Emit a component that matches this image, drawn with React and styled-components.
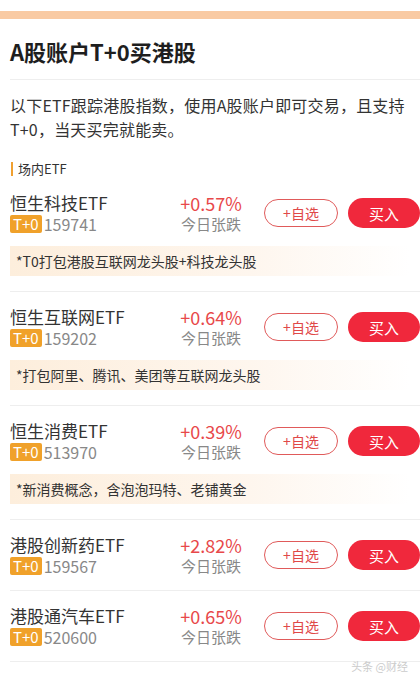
import React from 'react';
import styled, { createGlobalStyle } from 'styled-components';

const GlobalStyle = createGlobalStyle`
  body {
    margin: 0;
    background: #fff;
    font-family: "Noto Sans CJK SC", "Noto Sans", sans-serif;
    color: #333;
  }
`;

const funds = [
  { name: '恒生科技ETF', code: '159741', change: '+0.57%', note: '*T0打包港股互联网龙头股+科技龙头股' },
  { name: '恒生互联网ETF', code: '159202', change: '+0.64%', note: '*打包阿里、腾讯、美团等互联网龙头股' },
  { name: '恒生消费ETF', code: '513970', change: '+0.39%', note: '*新消费概念，含泡泡玛特、老铺黄金' },
  { name: '港股创新药ETF', code: '159567', change: '+2.82%' },
  { name: '港股通汽车ETF', code: '520600', change: '+0.65%' },
  { name: '港股通互联网ETF', code: '513040', change: '+0.41%' },
];

function App() {
  return (
    <>
      <GlobalStyle />
      <StyledPage>
        <StyledTopBar />
        <StyledTitle>A股账户T+0买港股</StyledTitle>
        <StyledIntro>
          以下ETF跟踪港股指数，使用A股账户即可交易，且支持T+0，当天买完就能卖。
        </StyledIntro>
        <StyledSection>场内ETF</StyledSection>
        <StyledList>
          {funds.map((item) => (
            <StyledRow key={item.code} hasNote={!!item.note}>
              <StyledMain>
                <StyledInfo>
                  <StyledName>{item.name}</StyledName>
                  <StyledCodeLine>
                    <StyledBadge>T+0</StyledBadge>
                    <span>{item.code}</span>
                  </StyledCodeLine>
                </StyledInfo>
                <StyledChange>
                  <StyledPercent>{item.change}</StyledPercent>
                  <StyledChangeLabel>今日张跌</StyledChangeLabel>
                </StyledChange>
                <StyledWatchButton>+自选</StyledWatchButton>
                <StyledBuyButton>买入</StyledBuyButton>
              </StyledMain>
              {item.note && <StyledNote>{item.note}</StyledNote>}
            </StyledRow>
          ))}
        </StyledList>
        <StyledWatermark>头条 @财经</StyledWatermark>
      </StyledPage>
    </>
  );
}

const StyledPage = styled.div`
  position: relative;
  width: 420px;
  height: 679px;
  overflow: hidden;
`;

const StyledTopBar = styled.div`
  margin-top: 11px;
  height: 8px;
  background: #f9caa3;
`;

const StyledTitle = styled.h1`
  margin: 0 0 0 10px;
  padding: 18px 0 14px;
  font-size: 22px;
  line-height: 28px;
  font-weight: 700;
  color: #1e1e1e;
  border-bottom: 1px solid #eeeeee;
`;

const StyledIntro = styled.p`
  margin: 13px 10px 0;
  font-size: 16px;
  line-height: 24px;
  letter-spacing: 0.2px;
  color: #333;
`;

const StyledSection = styled.div`
  display: flex;
  align-items: center;
  gap: 5px;
  margin: 18px 0 0 11px;
  font-size: 13px;
  line-height: 20px;
  color: #333;

  &::before {
    content: '';
    width: 2px;
    height: 14px;
    background: #f0a030;
  }
`;

const StyledList = styled.div`
  display: flex;
  flex-direction: column;
`;

const StyledRow = styled.div`
  margin-left: 10px;
  padding: 14px 0 ${(p) => (p.hasNote ? '15px' : '14px')};
  border-bottom: 1px solid #eeeeee;

  &:first-child {
    padding-top: 13px;
  }
`;

const StyledMain = styled.div`
  display: flex;
  align-items: center;
`;

const StyledInfo = styled.div`
  flex: 1;
  display: flex;
  flex-direction: column;
`;

const StyledName = styled.div`
  font-size: 17px;
  line-height: 22px;
  color: #333;
`;

const StyledCodeLine = styled.div`
  display: flex;
  align-items: center;
  gap: 2px;
  font-size: 16px;
  line-height: 20px;
  color: #888;
`;

const StyledBadge = styled.span`
  padding: 0 3px;
  background: #f0a12a;
  color: #fff;
  font-size: 15px;
  line-height: 18px;
  border-radius: 2px;
`;

const StyledChange = styled.div`
  width: 64px;
  margin-right: 21px;
  display: flex;
  flex-direction: column;
  align-items: center;
`;

const StyledPercent = styled.div`
  font-size: 18px;
  line-height: 22px;
  color: #e8484a;
`;

const StyledChangeLabel = styled.div`
  font-size: 15px;
  line-height: 20px;
  color: #888;
`;

const StyledWatchButton = styled.button`
  width: 74px;
  height: 28px;
  margin-right: 10px;
  padding: 0;
  border: 1.5px solid #e05a5a;
  border-radius: 14px;
  background: #fff;
  color: #e04848;
  font-family: inherit;
  font-size: 14px;
`;

const StyledBuyButton = styled.button`
  width: 72px;
  height: 30px;
  padding: 0;
  border: none;
  border-radius: 15px;
  background: #f0283c;
  color: #fff;
  font-family: inherit;
  font-size: 15px;
`;

const StyledNote = styled.div`
  margin: 12px 10px 0 0;
  padding-left: 6px;
  height: 30px;
  line-height: 30px;
  font-size: 14px;
  color: #333;
  background: linear-gradient(90deg, #fdeedc 0%, #fef6ee 60%, #ffffff 100%);
`;

const StyledWatermark = styled.div`
  position: absolute;
  right: 12px;
  top: 658px;
  font-size: 11px;
  color: #ccc;
`;

export default App;
